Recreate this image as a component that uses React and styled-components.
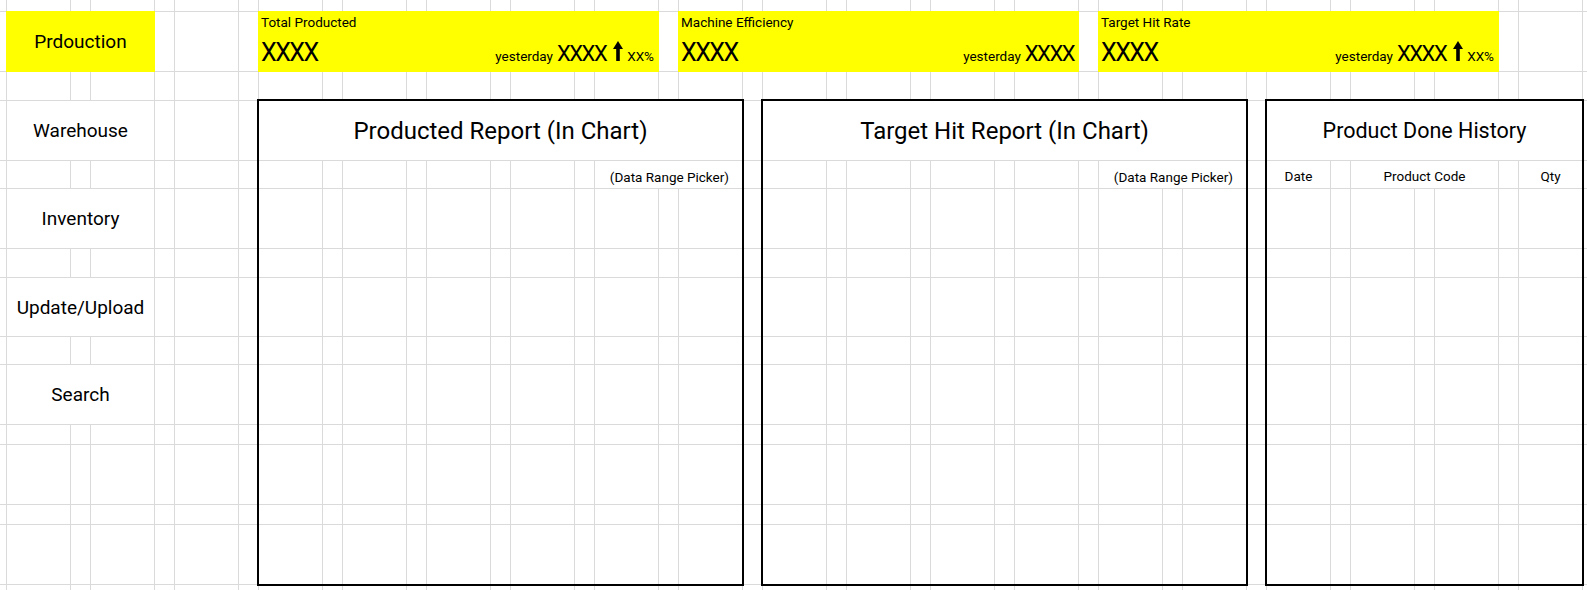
import styled, { createGlobalStyle } from "styled-components";

// sheet tracks: a partial column, then pairs of wide (64) and narrow (20) columns
const COLS = [6, ...Array.from({ length: 19 }, () => [63, 19]).flat(), 63];
const ROWS = [11, 59, 28, 59, 27, 59, 28, 58, 27, 59, 19, 59, 19, 59, 20];
const PANEL_ROWS = 11;
const YELLOW = "#ffff00";

const GlobalStyle = createGlobalStyle`
  html, body {
    margin: 0;
    padding: 0;
    background: #fff;
    overflow: hidden;
  }

  body {
    font-family: Roboto, "Noto Sans", Arial, sans-serif;
    color: #000;
  }
`;

const Sheet = styled.div`
  display: grid;
  grid-template-columns: ${COLS.map((w) => `${w}px`).join(" ")};
  grid-template-rows: ${ROWS.map((h) => `${h}px`).join(" ")};
  grid-auto-rows: 20px;
  gap: 1px;
  width: max-content;
  background: #dadada;
`;

const Cell = styled.div`
  background: #fff;
`;

const NavItem = styled.div`
  grid-column: 2 / 5;
  grid-row: ${(p) => p.$row};
  display: flex;
  align-items: center;
  justify-content: center;
  background: ${(p) => (p.$active ? YELLOW : "#fff")};
  outline: ${(p) => (p.$active ? `1px solid ${YELLOW}` : "none")};
  font-size: 19px;
`;

const Card = styled.div`
  grid-row: 2;
  grid-column: ${(p) => p.$col} / span 9;
  display: flex;
  flex-direction: column;
  justify-content: space-between;
  padding: 2px 4px 6px 2px;
  background: ${YELLOW};
  outline: 1px solid ${YELLOW};
`;

const CardLabel = styled.div`
  font-size: 13.5px;
  line-height: 16px;
`;

const CardRow = styled.div`
  display: flex;
  align-items: baseline;
  justify-content: space-between;
`;

const BigValue = styled.span`
  font-size: 25px;
  line-height: 1;
  letter-spacing: -1.5px;
`;

const Compare = styled.div`
  display: flex;
  align-items: baseline;
`;

const Small = styled.span`
  font-size: 13.5px;
  line-height: 1;
`;

const MidValue = styled.span`
  margin-left: 4px;
  font-size: 22px;
  line-height: 1;
  letter-spacing: -1.5px;
`;

const Arrow = styled.svg`
  margin: 0 4px 0 7px;
  display: block;
`;

const Panel = styled.section`
  grid-row: 4 / 15;
  grid-column: ${(p) => p.$col} / span ${(p) => p.$span};
  display: grid;
  grid-template-columns: subgrid;
  grid-template-rows: subgrid;
  background: #dadada;
  outline: 2px solid #000;
`;

const PanelTitle = styled.h2`
  grid-row: 1;
  grid-column: 1 / -1;
  margin: 0;
  display: flex;
  align-items: center;
  justify-content: center;
  background: #fff;
  font-size: ${(p) => p.$size}px;
  font-weight: 400;
`;

const Picker = styled.div`
  grid-row: 2;
  grid-column: ${(p) => p.$col} / span 3;
  display: flex;
  align-items: flex-end;
  justify-content: flex-end;
  padding: 0 13px 3px 0;
  background: #fff;
  font-size: 13.5px;
  line-height: 16px;
`;

const ColHead = styled.div`
  grid-row: 2;
  grid-column: ${(p) => p.$col} / span ${(p) => p.$span};
  display: flex;
  align-items: flex-end;
  justify-content: center;
  padding-bottom: 4px;
  background: #fff;
  font-size: 13.5px;
  line-height: 16px;
`;

const NAV = [
  { row: 2, label: "Prdouction", active: true },
  { row: 4, label: "Warehouse" },
  { row: 6, label: "Inventory" },
  { row: 8, label: "Update/Upload" },
  { row: 10, label: "Search" },
];

const CARDS = [
  { col: 8, label: "Total Producted", trend: true },
  { col: 18, label: "Machine Efficiency", trend: false },
  { col: 28, label: "Target Hit Rate", trend: true },
];

const HISTORY_HEAD = [
  { col: 1, span: 1, label: "Date" },
  { col: 3, span: 3, label: "Product Code" },
  { col: 7, span: 1, label: "Qty" },
];

function blanks(n) {
  return Array.from({ length: n }, (_, i) => <Cell key={`b${i}`} />);
}

function UpArrow() {
  return (
    <Arrow width="10" height="20" viewBox="0 0 10 20">
      <path d="M5 0 L10 8 H6.8 V20 H3.2 V8 H0 Z" fill="#000" />
    </Arrow>
  );
}

function KpiCard({ col, label, trend }) {
  return (
    <Card $col={col}>
      <CardLabel>{label}</CardLabel>
      <CardRow>
        <BigValue>XXXX</BigValue>
        <Compare>
          <Small>yesterday</Small>
          <MidValue>XXXX</MidValue>
          {trend && (
            <>
              <UpArrow />
              <Small>XX%</Small>
            </>
          )}
        </Compare>
      </CardRow>
    </Card>
  );
}

function ChartPanel({ col, title }) {
  const span = 11;
  return (
    <Panel $col={col} $span={span}>
      <PanelTitle $size={24}>{title}</PanelTitle>
      <Picker $col={span - 2}>(Data Range Picker)</Picker>
      {blanks(span * PANEL_ROWS - span - 3)}
    </Panel>
  );
}

function HistoryPanel({ col }) {
  const span = 7;
  return (
    <Panel $col={col} $span={span}>
      <PanelTitle $size={21.5}>Product Done History</PanelTitle>
      {HISTORY_HEAD.map((h) => (
        <ColHead key={h.label} $col={h.col} $span={h.span}>
          {h.label}
        </ColHead>
      ))}
      {blanks(span * PANEL_ROWS - span - 5)}
    </Panel>
  );
}

export default function App() {
  const used = NAV.length * 3 + CARDS.length * 9 + (11 + 11 + 7) * PANEL_ROWS;
  return (
    <>
      <GlobalStyle />
      <Sheet>
        {blanks(COLS.length * ROWS.length - used)}
        {NAV.map((n) => (
          <NavItem key={n.label} $row={n.row} $active={n.active}>
            {n.label}
          </NavItem>
        ))}
        {CARDS.map((c) => (
          <KpiCard key={c.label} {...c} />
        ))}
        <ChartPanel col={8} title="Producted Report (In Chart)" />
        <ChartPanel col={20} title="Target Hit Report (In Chart)" />
        <HistoryPanel col={32} />
      </Sheet>
    </>
  );
}
